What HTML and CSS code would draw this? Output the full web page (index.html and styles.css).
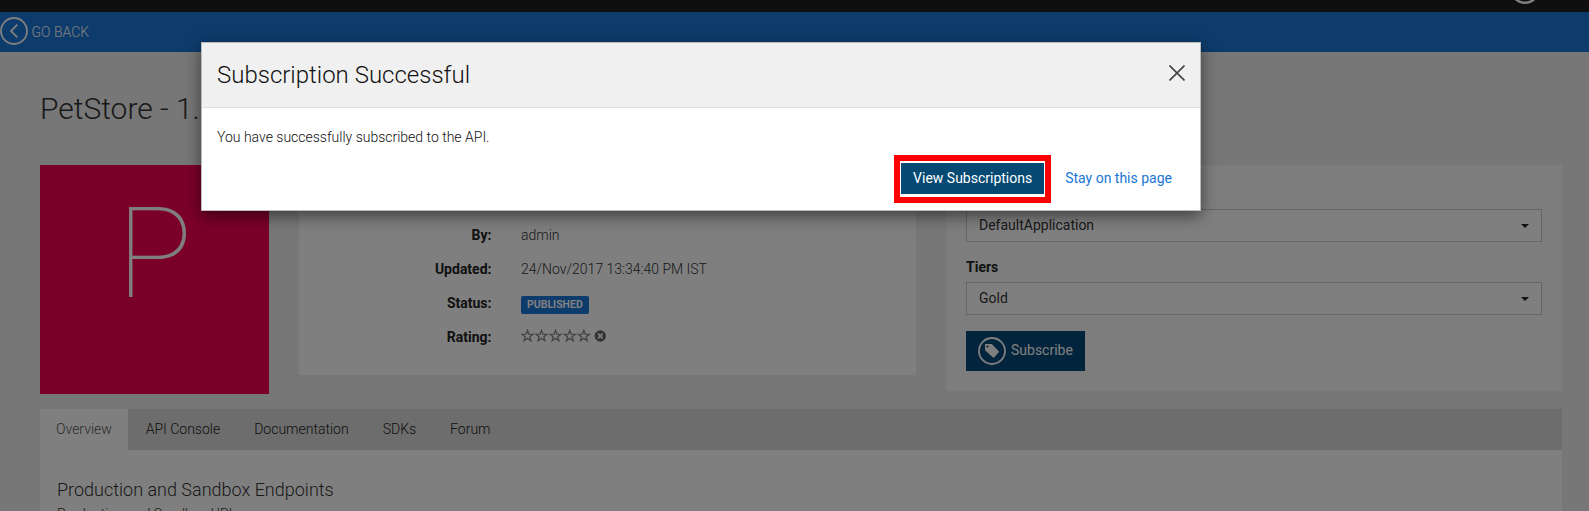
FILE: index.html
```html
<!DOCTYPE html>
<html lang="en">
<head>
<meta charset="utf-8">
<title>PetStore</title>
<link rel="stylesheet" href="styles.css">
</head>
<body>
<div class="page">
  <header class="topbar">
    <svg class="avatar" width="30" height="12" viewBox="0 0 30 12"><circle cx="15" cy="-10.500" r="13.300" fill="none" stroke="#fff" stroke-width="2.600"/></svg>
  </header>
  <nav class="backbar">
    <svg width="28" height="28" viewBox="0 0 28 28" fill="none" stroke="#fff"><circle cx="14" cy="14" r="13" stroke-width="1.8"/><path d="M17.3 7.6 11 14l6.3 6.4" stroke-width="1.8"/></svg>
    <span class="back-label">GO BACK</span>
  </nav>
  <main class="content">
    <h1 class="title">PetStore - 1.0.0</h1>
    <div class="columns">
      <div class="tile"><span class="tile-letter">P</span></div>
      <section class="details">
        <div class="row"><b class="key">By:</b><span>admin</span></div>
        <div class="row"><b class="key">Updated:</b><span class="date">24/Nov/2017 13:34:40 PM IST</span></div>
        <div class="row"><b class="key">Status:</b><span class="badge">PUBLISHED</span></div>
        <div class="row"><b class="key">Rating:</b>
          <svg class="rating" width="86" height="14" viewBox="0 0 86 14">
            <defs><path id="star" d="M6.5 1.3 7.9 5.1 12 5.3 8.8 7.7 9.9 11.7 6.5 9.4 3.1 11.7 4.2 7.7 1 5.3 5.1 5.1Z" fill="none" stroke="#888" stroke-width="1.3"/></defs>
            <use href="#star"/><use href="#star" x="14"/><use href="#star" x="28"/><use href="#star" x="42.3"/><use href="#star" x="56.3"/>
            <circle cx="79.3" cy="7" r="5.7" fill="#666"/><path d="m77 4.700 4.6 4.6m0-4.6L77 9.300" stroke="#fff" stroke-width="1.7"/>
          </svg>
        </div>
      </section>
      <section class="subscribe">
        <div class="select"><span>DefaultApplication</span><i class="caret"></i></div>
        <b class="tiers">Tiers</b>
        <div class="select"><span>Gold</span><i class="caret"></i></div>
        <div class="sub-btn">
          <svg width="28" height="28" viewBox="0 0 28 28"><circle cx="14" cy="14" r="13" fill="none" stroke="#fff" stroke-width="1.8"/><path fill="#fff" fill-rule="evenodd" d="M7 7h6.800L21.200 14.700 15.600 21 7 13.200ZM9.500 8.400a1.100 1.100 0 1 0 .01 0Z"/></svg>
          <span>Subscribe</span>
        </div>
      </section>
    </div>
    <div class="tabs">
      <span class="tab active">Overview</span><span class="tab">API Console</span><span class="tab">Documentation</span><span class="tab">SDKs</span><span class="tab">Forum</span>
    </div>
    <section class="panel">
      <h2 class="panel-title">Production and Sandbox Endpoints</h2>
      <div class="panel-text">Production and Sandbox URLs:</div>
    </section>
  </main>
</div>
<div class="backdrop">
  <div class="modal">
    <div class="modal-head">
      <h3 class="modal-title">Subscription Successful</h3>
      <svg class="close" width="16" height="16" viewBox="0 0 16 16"><path d="m.5.5 15 15m0-15-15 15" stroke="#444" stroke-width="1.6"/></svg>
    </div>
    <p class="modal-text">You have successfully subscribed to the API.</p>
    <div class="modal-foot">
      <div class="highlight"><span class="view-btn">View Subscriptions</span></div>
      <span class="stay">Stay on this page</span>
    </div>
  </div>
</div>
</body>
</html>
```
FILE: styles.css
```css
* { box-sizing: border-box; }
html, body { margin: 0; height: 511px; overflow: hidden; }
body { font: 300 14px/20px Roboto, sans-serif; color: #333; }
h1, h2, h3, p { margin: 0; font-weight: 300; }
svg { display: block; flex: none; }
b { font-weight: 700; }
.page { height: 511px; overflow: hidden; background: #efefef; }
.topbar { height: 12px; background: #1e1e1e; display: flex; justify-content: flex-end; padding-right: 49px; }
.backbar { height: 40px; background: #1a76d6; display: flex; align-items: flex-start; gap: 3.5px; padding-top: 5px; color: #fff; }
.back-label { line-height: 30px; }
.content { padding: 0 27px 0 40px; }
.title { height: 113px; padding-top: 37px; font-size: 30px; line-height: 40px; white-space: nowrap; }
.columns { display: flex; align-items: flex-start; gap: 30px; height: 244px; }
.tile { width: 229px; height: 229px; background: #f60052; color: #fff; display: flex; justify-content: center; flex: none; }
.tile-letter { font-size: 126px; font-weight: 100; line-height: 178px; }
.details { width: 617px; height: 210px; background: #fff; padding-top: 60px; display: flex; flex-direction: column; gap: 14px; flex: none; }
.row { display: flex; height: 20px; gap: 29.5px; align-items: center; }
.key { width: 192.5px; text-align: right; color: #222; }
.badge { height: 18px; padding: 0 6px; margin-top: 3px; border-radius: 2px; background: #1a76d6; color: #fff; font-size: 10.5px; font-weight: 700; line-height: 17px; }
.rating { margin-bottom: 2px; }
.subscribe { width: 616px; height: 226px; background: #fafafa; padding: 44px 20px 0; flex: none; }
.select { height: 33px; border: 1px solid #ccc; background: #fff; padding: 0 12px; display: flex; align-items: center; justify-content: space-between; font-weight: 400; }
.select span { padding-bottom: 2px; }
.caret { border: 4px solid transparent; border-top-color: #222; border-bottom: 0; }
.tiers { display: block; height: 40px; padding-top: 15px; color: #222; }
.sub-btn { width: 119px; height: 40px; margin-top: 16px; padding: 0 12px 1px; background: #044a7a; color: #fff; display: flex; align-items: center; gap: 5px; font-weight: 400; }
.sub-btn span { padding-bottom: 1px; }
.tabs { height: 41px; background: #dadada; display: flex; width: 1522px; }
.tab { padding: 0 17px; line-height: 40px; color: #222; }
.active { width: 88px; padding: 0 0 0 16px; margin-right: 0.7px; background: #fff; color: #555; }
.panel { width: 1522px; height: 100px; background: #fff; padding: 29px 17px; }
.panel-title { font-size: 18px; line-height: 22px; }
.panel-text { margin-top: 3px; }
.backdrop { position: absolute; inset: 0; background: rgba(0,0,0,.5); padding: 42px 0 0 201px; }
.modal { width: 1000px; height: 169px; background: #fff; border: 1px solid #bbb; box-shadow: 0 5px 15px rgba(0,0,0,.5); }
.modal-head { height: 65px; background: #f0f0f0; border-bottom: 1px solid #ddd; display: flex; justify-content: space-between; padding: 0 15px; }
.modal-title { font-size: 24px; line-height: 64px; color: #111; }
.close { margin-top: 22px; }
.modal-text { padding: 19px 15px 0; color: #111; }
.modal-foot { display: flex; justify-content: flex-end; gap: 14px; padding: 8px 28px 0 0; font-weight: 400; }
.highlight { width: 157px; height: 48px; border: 6px solid #f00; padding: 2px 1px 3px; }
.view-btn { display: block; height: 31px; background: #064a73; color: #fff; text-align: center; line-height: 30px; }
.stay { line-height: 46px; color: #1a76d6; }
```
